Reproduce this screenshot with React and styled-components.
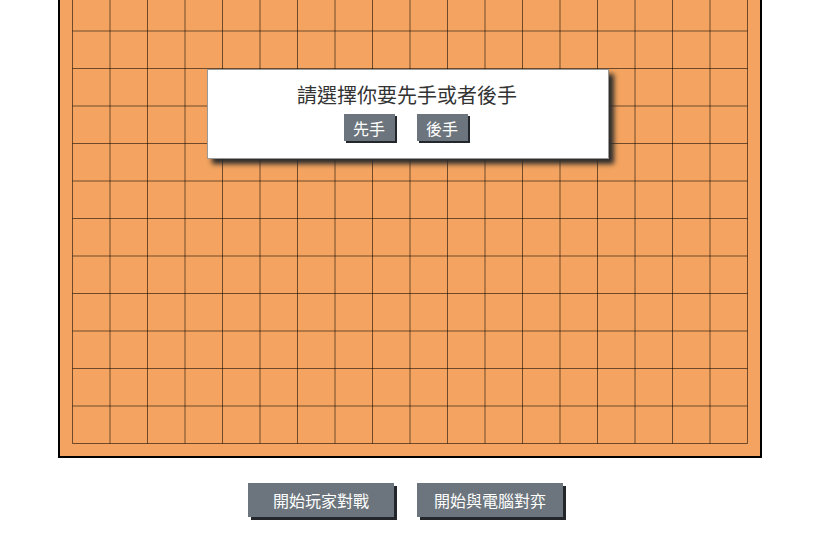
import React from 'react';
import styled, { createGlobalStyle } from 'styled-components';

const GlobalStyle = createGlobalStyle`
  body {
    margin: 0;
    background: #fff;
    font-family: "Noto Sans CJK TC", "Noto Sans", sans-serif;
  }
`;

// the page is shown scrolled down, so the top of the board is out of view
const Viewport = styled.div`
  height: 546px;
  overflow: hidden;
`;

const Page = styled.div`
  margin-top: -246px;
  padding: 0 8px;
`;

const Board = styled.div`
  position: relative;
  width: 700px;
  height: 700px;
  margin: 0 auto;
  border: 2px solid #000;
  background-color: #f4a460;
`;

const Dialog = styled.div`
  position: absolute;
  left: 147px;
  top: 313px;
  width: 400px;
  height: 88px;
  background: #fff;
  border: 1px solid #999;
  box-shadow: 5px 5px 5px #2b2b2b;
  display: flex;
  flex-direction: column;
  align-items: center;
`;

const Title = styled.div`
  height: 30px;
  margin-top: 10px;
  line-height: 30px;
  font-size: 20px;
  color: #333;
  padding-right: 2px;
`;

const Choices = styled.div`
  display: flex;
  gap: 22px;
  margin-top: 4px;
  padding-right: 5px;
`;

const Btn = styled.button`
  width: ${p => (p.$small ? '51px' : '146px')};
  height: ${p => (p.$small ? '27px' : '34px')};
  padding: 0;
  border: none;
  background-color: #6c757d;
  color: #fff;
  font-family: inherit;
  font-size: 16px;
  box-shadow: ${p => (p.$small ? '2px 2px 0 #23272b' : '3px 3px 0 #23272b')};
  cursor: pointer;
`;

const Bar = styled.div`
  display: flex;
  justify-content: center;
  gap: 23px;
  margin-top: 25px;
  padding-right: 9px;
`;

const STEP = 37.5;
const lines = Array.from({ length: 19 }, (_, i) => 12.5 + i * STEP);

const Grid = () => (
  <svg width="700" height="700" style={{ display: 'block' }}>
    <g stroke="#000" strokeOpacity="0.55" strokeWidth="1">
      {lines.map(v => (
        <line key={'v' + v} x1={v} y1={12.5} x2={v} y2={687.5} />
      ))}
      {lines.map(v => (
        <line key={'h' + v} x1={12.5} y1={v} x2={687.5} y2={v} />
      ))}
    </g>
  </svg>
);

const App = () => {
  return (
    <>
      <GlobalStyle />
      <Viewport>
        <Page>
          <Board>
            <Grid />
            <Dialog>
              <Title>請選擇你要先手或者後手</Title>
              <Choices>
                <Btn $small>先手</Btn>
                <Btn $small>後手</Btn>
              </Choices>
            </Dialog>
          </Board>
          <Bar>
            <Btn>開始玩家對戰</Btn>
            <Btn>開始與電腦對弈</Btn>
          </Bar>
        </Page>
      </Viewport>
    </>
  );
};

export default App;
